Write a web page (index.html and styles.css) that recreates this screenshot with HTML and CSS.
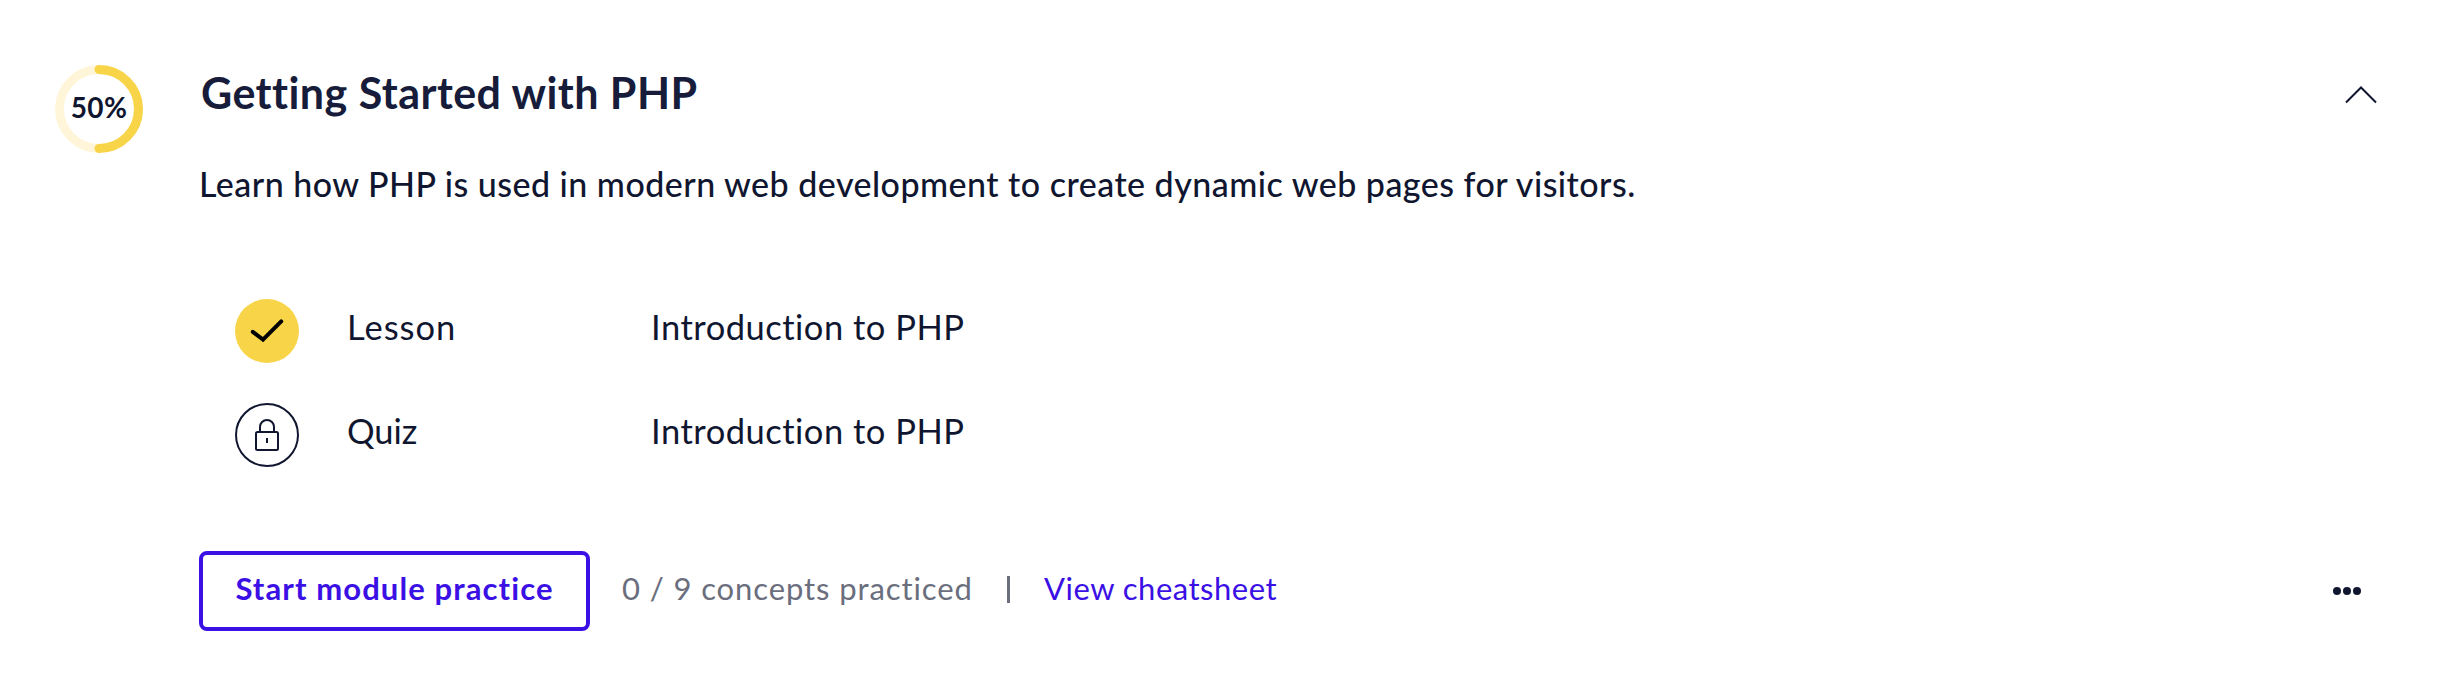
FILE: index.html
```html
<!DOCTYPE html>
<html lang="en">
<head>
<meta charset="utf-8">
<title>Getting Started with PHP</title>
<link rel="stylesheet" href="styles.css">
</head>
<body>
<section class="module">
  <div class="progress">
    <svg class="progress-ring" viewBox="0 0 88 88" fill="none" stroke-width="9" stroke-linecap="round">
      <circle cx="44" cy="44" r="39.5" stroke="#fff6d9"/>
      <path d="M44 4.5A39.5 39.5 0 0 1 44 83.5" stroke="#f8d448"/>
    </svg>
    <span class="progress-value">50%</span>
  </div>
  <div class="content">
    <header class="header">
      <h2 class="title"><span>Getting Started with PHP</span></h2>
      <svg class="chevron" viewBox="0 0 32 18" fill="none" stroke="#10162f" stroke-width="2"><path d="M1 16.5L16 1.5L31 16.5"/></svg>
    </header>
    <p class="description"><span>Learn how PHP is used in modern web development to create dynamic web pages for visitors.</span></p>
    <ul class="items">
      <li class="item">
        <svg class="status" viewBox="0 0 64 64" fill="none"><circle cx="32" cy="32" r="32" fill="#f8d448"/><path d="M17.8 32.8L28 40.6L46.2 22.4" stroke="#000" stroke-width="4" stroke-linecap="round"/></svg>
        <span class="kind kind-lesson">Lesson</span>
        <span class="name">Introduction to PHP</span>
      </li>
      <li class="item">
        <svg class="status" viewBox="0 0 64 64" fill="none" stroke="#10162f" stroke-width="2"><circle cx="32" cy="32" r="31"/><rect x="21" y="29" width="22" height="18" rx="1.5"/><path d="M25 29V24A7 7 0 0 1 39 24V29M32 35V40"/></svg>
        <span class="kind kind-quiz">Quiz</span>
        <span class="name">Introduction to PHP</span>
      </li>
    </ul>
    <footer class="footer">
      <button class="practice"><span>Start module practice</span></button>
      <span class="count">0 / 9 concepts practiced</span>
      <span class="divider"></span>
      <a class="cheatsheet">View cheatsheet</a>
      <svg class="more" viewBox="0 0 28 8" fill="#10162f"><circle cx="4" cy="4" r="4"/><circle cx="14" cy="4" r="4"/><circle cx="24" cy="4" r="4"/></svg>
    </footer>
  </div>
</section>
</body>
</html>
```
FILE: styles.css
```css
* { box-sizing: border-box; }
body { margin: 0; background: #fff; color: #10162f; font-family: Lato, "Open Sans", sans-serif; font-variant-ligatures: none; }
.module { display: grid; grid-template-columns: 88px 1fr; column-gap: 56px; padding: 64px 76px 0 55px; height: 678px; white-space: nowrap; }
.progress { display: grid; place-items: center; width: 88px; height: 88px; margin-top: 1px; }
.progress-ring, .progress-value { grid-area: 1 / 1; }
.progress-ring { width: 88px; height: 88px; }
.progress-value { font-size: 28px; font-weight: 700; line-height: 32px; padding-bottom: 4px; letter-spacing: 0.3px; }
.header { display: flex; justify-content: space-between; height: 56px; }
.title { margin: 0; padding: 1px 0 0 2px; font-size: 43px; line-height: 56px; font-weight: 700; letter-spacing: 0.45px; color: #161c3a; }
.chevron { width: 32px; height: 18px; margin-top: 22px; margin-right: -1px; }
.description { margin: 40px 0 0; font-size: 34px; line-height: 48px; font-weight: 500; letter-spacing: 0.47px; }
.items { list-style: none; margin: 91px 0 0; padding: 0 0 0 36px; display: grid; row-gap: 40px; }
.item { display: grid; grid-template-columns: 64px 352px auto; height: 64px; font-size: 34.5px; line-height: 56px; letter-spacing: 0.5px; }
.status { width: 64px; height: 64px; }
.kind { padding-left: 48px; }
.kind-lesson { letter-spacing: 1px; }
.kind-quiz { letter-spacing: 0; }
.footer { display: flex; align-items: center; height: 80px; margin-top: 84px; font-size: 31px; }
.practice { width: 391px; height: 80px; padding: 0 0 6px; border: 4px solid #3a10e5; border-radius: 8px; background: #fff; color: #3a10e5; font: 700 31px Lato, sans-serif; letter-spacing: 1.1px; font-variant-ligatures: none; }
.count { margin-left: 32px; width: 353px; padding-bottom: 6px; letter-spacing: 0.9px; color: #6a6e7d; }
.divider { width: 3px; height: 27px; margin: 0 34px 4px 32px; background: #6a6e7d; }
.cheatsheet { color: #3a10e5; padding-bottom: 6px; letter-spacing: 0.5px; }
.more { width: 28px; height: 8px; margin-left: auto; margin-right: 15px; }
```
